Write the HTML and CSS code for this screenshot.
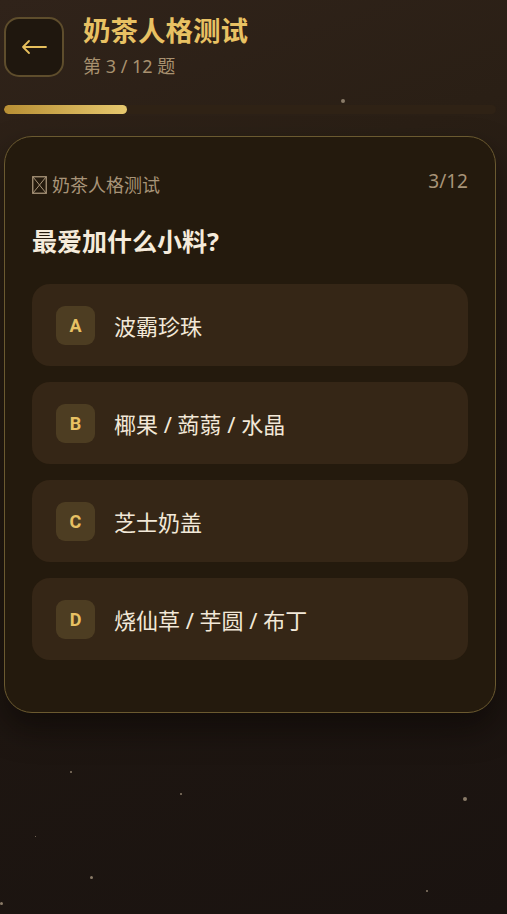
FILE: index.html
```html
<!DOCTYPE html>
<html lang="zh">
<head>
<meta charset="utf-8">
<link rel="stylesheet" href="styles.css">
</head>
<body>
<div class="page">
  <span class="star" style="left:341px;top:99px;width:4px;height:4px"></span>
  <span class="star" style="left:70px;top:771px;width:2px;height:2px"></span>
  <span class="star" style="left:180px;top:793px;width:2px;height:2px"></span>
  <span class="star" style="left:463px;top:797px;width:4px;height:4px"></span>
  <span class="star" style="left:35px;top:836px;width:1px;height:1px"></span>
  <span class="star" style="left:90px;top:876px;width:3px;height:3px"></span>
  <span class="star" style="left:426px;top:890px;width:2px;height:2px"></span>
  <span class="star" style="left:0px;top:902px;width:3px;height:3px"></span>

  <header class="header">
    <button class="back">
      <svg width="28" height="16" viewBox="0 0 28 16"><path d="M26 8H3M9 2L3 8l6 6" fill="none" stroke="#e6bf5c" stroke-width="1.8" stroke-linecap="round" stroke-linejoin="round"/></svg>
    </button>
    <div class="titles">
      <h1 class="title">奶茶人格测试</h1>
      <div class="sub">第 3 / 12 题</div>
    </div>
  </header>

  <div class="progress"><div class="fill" style="width:25%"></div></div>

  <section class="card">
    <div class="card-head">
      <span class="quiz-name">
        <svg class="tofu" width="15" height="18" viewBox="0 0 15 18"><rect x="0.75" y="0.75" width="13.5" height="16.5" fill="none" stroke="#a89478" stroke-width="1.3"/><path d="M1 1L14 17M14 1L1 17" stroke="#a89478" stroke-width="1"/></svg>
        奶茶人格测试
      </span>
      <span class="count">3/12</span>
    </div>
    <h2 class="question">最爱加什么小料?</h2>
    <div class="options">
      <div class="option"><span class="badge">A</span><span class="label">波霸珍珠</span></div>
      <div class="option"><span class="badge">B</span><span class="label">椰果 / 蒟蒻 / 水晶</span></div>
      <div class="option"><span class="badge">C</span><span class="label">芝士奶盖</span></div>
      <div class="option"><span class="badge">D</span><span class="label">烧仙草 / 芋圆 / 布丁</span></div>
    </div>
  </section>
</div>
</body>
</html>
```
FILE: styles.css
```css
html, body {
  margin: 0;
  padding: 0;
}
body {
  background: #1b1410;
  font-family: "Noto Sans", "Noto Sans CJK SC", sans-serif;
}
.page {
  position: relative;
  width: 507px;
  height: 914px;
  box-sizing: border-box;
  padding: 16px 11px 0 4px;
  background: linear-gradient(160deg, #30231a 0%, #2a1f15 25%, #1e1611 65%, #1a1310 100%);
  overflow: hidden;
}
.star {
  position: absolute;
  border-radius: 50%;
  background: #8a7b68;
}
.header {
  display: flex;
  align-items: center;
  gap: 19px;
}
.back {
  width: 60px;
  height: 60px;
  box-sizing: border-box;
  border: 2px solid #5e4d2c;
  border-radius: 15px;
  background: #1f170e;
  display: flex;
  align-items: center;
  justify-content: center;
  padding: 0;
}
.titles {
  display: flex;
  flex-direction: column;
  margin-top: -2px;
}
.title {
  margin: 0;
  font-size: 27.5px;
  line-height: 34px;
  font-weight: 700;
  color: #e8c163;
}
.sub {
  margin-top: 6px;
  font-size: 18px;
  line-height: 24px;
  color: #a8916f;
}
.progress {
  margin-top: 27px;
  height: 9px;
  border-radius: 5px;
  background: #2f2215;
  overflow: hidden;
}
.fill {
  height: 100%;
  border-radius: 5px;
  background: linear-gradient(90deg, #b88f34, #e6c86e);
}
.card {
  margin-top: 22px;
  border: 1.5px solid #6b5a30;
  border-radius: 28px;
  background: #241a0d;
  padding: 36px 27px 52px;
  box-shadow: 0 16px 30px rgba(10, 6, 3, 0.55);
}
.card-head {
  display: flex;
  justify-content: space-between;
  align-items: center;
  font-size: 18px;
  line-height: 24px;
  color: #a89478;
}
.quiz-name {
  display: flex;
  align-items: center;
  gap: 5px;
}
.count {
  font-size: 19px;
  margin-top: -8px;
}
.question {
  margin: 27px 0 26px;
  font-size: 25px;
  line-height: 34px;
  font-weight: 700;
  color: #f5ebdb;
}
.options {
  display: flex;
  flex-direction: column;
  gap: 16px;
}
.option {
  height: 82px;
  box-sizing: border-box;
  border-radius: 18px;
  background: #352616;
  display: flex;
  align-items: center;
  padding-left: 24px;
  gap: 19px;
}
.badge {
  width: 39px;
  height: 39px;
  border-radius: 9px;
  background: #4d3d22;
  color: #e8c163;
  font-family: Roboto, "Noto Sans", sans-serif;
  font-weight: 700;
  font-size: 18px;
  display: flex;
  align-items: center;
  justify-content: center;
}
.label {
  font-size: 22px;
  color: #f2e8d8;
}
```
